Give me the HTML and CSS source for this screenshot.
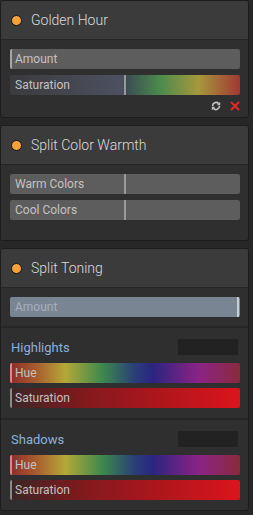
FILE: index.html
```html
<!DOCTYPE html>
<html>
<head>
<meta charset="utf-8">
<link rel="stylesheet" href="styles.css">
</head>
<body>
<div class="stack">
  <section class="panel">
    <header class="head"><span class="dot"></span><span class="title">Golden Hour</span></header>
    <div class="body">
      <div class="bar plain"><span class="handle"></span><span class="lbl">Amount</span></div>
      <div class="bar gh-sat"><span class="handle mid"></span><span class="lbl">Saturation</span></div>
      <div class="actions">
        <svg class="ico" width="10" height="10" viewBox="0 0 10 10">
          <path d="M1.5 5 A3.5 3.5 0 0 1 7.6 2.6" fill="none" stroke="#c4c4c4" stroke-width="1.6"/>
          <path d="M9.2 0.8 L9.2 4.2 L5.8 4.2 Z" fill="#c4c4c4"/>
          <path d="M8.5 5 A3.5 3.5 0 0 1 2.4 7.4" fill="none" stroke="#c4c4c4" stroke-width="1.6"/>
          <path d="M0.8 9.2 L0.8 5.8 L4.2 5.8 Z" fill="#c4c4c4"/>
        </svg>
        <svg class="ico" width="10" height="10" viewBox="0 0 10 10">
          <path d="M1 1 L9 9 M9 1 L1 9" stroke="#e8262b" stroke-width="2"/>
        </svg>
      </div>
    </div>
  </section>

  <section class="panel">
    <header class="head"><span class="dot"></span><span class="title">Split Color Warmth</span></header>
    <div class="body warmth">
      <div class="bar plain"><span class="handle mid"></span><span class="lbl">Warm Colors</span></div>
      <div class="bar plain"><span class="handle mid"></span><span class="lbl">Cool Colors</span></div>
    </div>
  </section>

  <section class="panel last">
    <header class="head"><span class="dot"></span><span class="title">Split Toning</span></header>
    <div class="body amount-sec">
      <div class="bar slate"><span class="lbl">Amount</span><span class="handle right"></span></div>
    </div>
    <div class="tone">
      <div class="tone-head"><span class="tone-title">Highlights</span><span class="swatch"></span></div>
      <div class="bar hue"><span class="handle red"></span><span class="lbl">Hue</span></div>
      <div class="bar sat"><span class="handle gray"></span><span class="lbl">Saturation</span></div>
    </div>
    <div class="tone">
      <div class="tone-head"><span class="tone-title">Shadows</span><span class="swatch"></span></div>
      <div class="bar hue"><span class="handle red"></span><span class="lbl">Hue</span></div>
      <div class="bar sat"><span class="handle gray"></span><span class="lbl">Saturation</span></div>
    </div>
  </section>
</div>
</body>
</html>
```

FILE: styles.css
```css
html, body {
  margin: 0;
  padding: 0;
  background: #272727;
  font-family: Roboto, "Noto Sans", sans-serif;
}
.stack {
  display: flex;
  flex-direction: column;
  gap: 7px;
  width: 249px;
}
.panel {
  background: #2f2f2f;
  border: 1px solid #1d1d1d;
  border-radius: 3px;
  overflow: hidden;
}
.head {
  background: #3b3b3b;
  border-bottom: 1px solid #252525;
  display: flex;
  align-items: center;
  padding-left: 10px;
  box-sizing: border-box;
  height: 39px;
}
.dot {
  width: 9px;
  height: 9px;
  border-radius: 50%;
  background: #f7a13a;
  border: 1px solid #151515;
  margin-right: 9px;
}
.title {
  color: #dcdcdc;
  font-size: 14px;
  font-weight: 300;
}
.body {
  padding: 9px 8px 0 9px;
  display: flex;
  flex-direction: column;
  gap: 6px;
}
.bar {
  position: relative;
  height: 20px;
  border-radius: 2px;
  display: flex;
  align-items: center;
  overflow: hidden;
}
.lbl {
  position: relative;
  padding-left: 5px;
  font-size: 12px;
  color: #c2c2c2;
}
.handle {
  position: absolute;
  left: 0;
  top: 0;
  width: 2px;
  height: 20px;
  background: #a6a6a6;
}
.handle.mid { left: 114px; background: #9a9a9a; }
.handle.right { left: auto; right: 1px; background: #c9cdd2; }
.handle.red { background: #d88a8a; }
.handle.gray { background: #8a8a8a; }
.plain { background: #5d5d5d; }
.gh-sat {
  background: linear-gradient(90deg, #3b3b3d 0%, #4d5060 49%, #3a4a52 50%, #4b8a4d 65%, #a5983c 82%, #a13731 100%);
}
.actions {
  display: flex;
  justify-content: flex-end;
  gap: 9px;
  padding: 1px 0 6px;
  margin-top: -1px;
}
.ico { display: block; }
.warmth { padding-bottom: 20px; }
.slate { background: #7a8594; }
.slate .lbl { color: #a6afbb; }
.amount-sec { padding-bottom: 9px; border-bottom: 2px solid #262626; }
.tone {
  padding: 11px 8px 10px 9px;
  display: flex;
  flex-direction: column;
  gap: 5px;
}
.tone + .tone { border-top: 2px solid #262626; }
.tone-head {
  display: flex;
  justify-content: space-between;
  align-items: center;
  height: 16px;
  margin-bottom: 3px;
  padding-left: 1px;
}
.tone-title {
  color: #8db1dc;
  font-size: 13px;
}
.swatch {
  width: 60px;
  height: 16px;
  background: #222222;
  margin-right: 2px;
}
.hue {
  background: linear-gradient(90deg, #8e2b2b 0%, #a8602f 12%, #b4a838 24%, #3d8a4b 40%, #2a3f78 54%, #2a2580 62%, #6a2383 75%, #8a2485 82%, #8a2a3c 100%);
}
.sat {
  background: linear-gradient(90deg, #3a2626 0%, #7e1a1e 30%, #a8161c 60%, #dc141c 100%);
}
```
